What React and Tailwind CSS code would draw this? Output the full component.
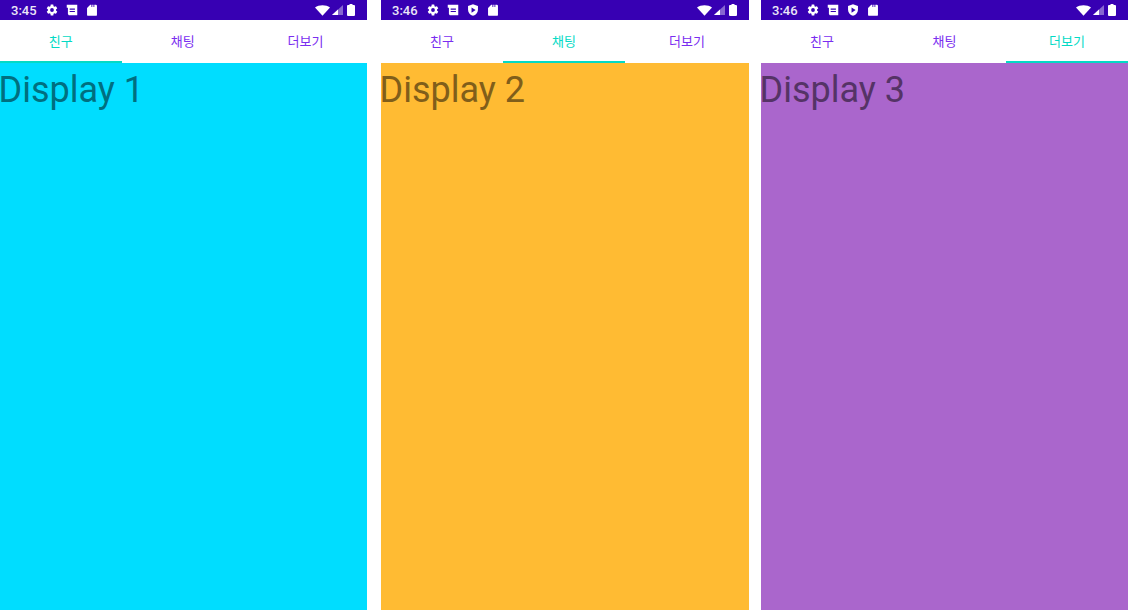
const tabs = ["친구", "채팅", "더보기"];

function Gear() {
  return (
    <svg width="14" height="14" viewBox="-1 -1 26 26" fill="#fff">
      <path d="M19.4 13c.04-.33.06-.66.06-1s-.02-.67-.07-1l2.11-1.63c.19-.15.24-.42.12-.64l-2-3.46c-.12-.22-.39-.3-.61-.22l-2.49 1c-.52-.4-1.08-.73-1.69-.98l-.38-2.65A.49.49 0 0 0 14 2h-4c-.25 0-.46.18-.49.42l-.38 2.65c-.61.25-1.17.59-1.69.98l-2.49-1a.5.5 0 0 0-.61.22l-2 3.46c-.13.22-.07.49.12.64L4.57 11c-.05.33-.07.66-.07 1s.02.67.07 1l-2.11 1.63c-.19.15-.24.42-.12.64l2 3.46c.12.22.39.3.61.22l2.49-1c.52.4 1.08.73 1.69.98l.38 2.65c.03.24.24.42.49.42h4c.25 0 .46-.18.49-.42l.38-2.65c.61-.25 1.17-.59 1.69-.98l2.49 1c.22.08.49 0 .61-.22l2-3.46c.12-.22.07-.49-.12-.64L19.4 13zM12 15.5a3.5 3.5 0 1 1 0-7 3.5 3.5 0 0 1 0 7z" />
    </svg>
  );
}

function Note() {
  return (
    <svg width="14" height="14" viewBox="0 0 24 24" fill="#fff">
      <path d="M3 3h18v18H6.500L5 19V8H3V3zm5 6.500v2h9v-2H8zm0 4v2h9v-2H8z" fillRule="evenodd" />
    </svg>
  );
}

function Shield() {
  return (
    <svg width="14" height="14" viewBox="0 0 24 24" fill="#fff">
      <path d="M12 2 3.500 5v6.500c0 5 3.400 9 8.500 10.500 5.100-1.500 8.500-5.500 8.500-10.500V5L12 2zM9.500 7.500l7 4.500-7 4.500v-9z" fillRule="evenodd" />
    </svg>
  );
}

function Sd() {
  return (
    <svg width="14" height="14" viewBox="0 0 24 24" fill="#fff">
      <path d="M9 3h2v4h1.500V3h2v4H16V3h2.500a2 2 0 0 1 2 2v15a2 2 0 0 1-2 2h-13a2 2 0 0 1-2-2V8.500L9 3z" />
    </svg>
  );
}

function Wifi() {
  return (
    <svg width="15" height="11" viewBox="0 0 14 10" fill="#fff">
      <path d="M0 2.200C1.900.8 4.300 0 7 0s5.100.8 7 2.200L7 10 0 2.200z" />
    </svg>
  );
}

function Signal() {
  return (
    <svg width="13" height="10" viewBox="0 0 13 10">
      <path d="M13 0v10H2L13 0z" fill="#fff" fillOpacity="0.4" />
      <path d="M8 4.550V10H2l6-5.450z" fill="#fff" />
    </svg>
  );
}

function Battery() {
  return (
    <svg width="8" height="12" viewBox="0 0 8 12" fill="#fff">
      <path d="M2.500 0h3v1H7a1 1 0 0 1 1 1v9a1 1 0 0 1-1 1H1a1 1 0 0 1-1-1V2a1 1 0 0 1 1-1h1.500V0z" />
    </svg>
  );
}

function StatusBar({ time, shield }) {
  return (
    <div className="flex h-5 items-center bg-[#3700b3] pl-[11px] pr-3 text-white">
      <span className="w-[26px] text-[13px] font-medium leading-none opacity-90">{time}</span>
      <div className="ml-2 flex items-center gap-[6px]">
        <Gear />
        <Note />
        {shield && <Shield />}
        <Sd />
      </div>
      <div className="ml-auto flex items-center">
        <Wifi />
        <Signal />
        <span className="ml-1 flex">
          <Battery />
        </span>
      </div>
    </div>
  );
}

function Phone({ time, shield, active, color, textColor, label, width, cols }) {
  return (
    <div className={`flex h-[610px] flex-col ${width}`}>
      <StatusBar time={time} shield={shield} />
      <div className={`grid h-[43px] bg-white ${cols}`}>
        {tabs.map((tab, index) => (
          <div
            key={tab}
            className={
              index === active
                ? "flex items-center justify-center border-b-2 border-[#03dac5] pt-[2px] text-[13px] text-[#03dac5]"
                : "flex items-center justify-center text-[13px] text-[#7a2ef0]"
            }
          >
            {tab}
          </div>
        ))}
      </div>
      <div className={`flex-1 ${color}`}>
        <p className={`-ml-[1.5px] text-4xl leading-[54px] ${textColor}`}>{label}</p>
      </div>
    </div>
  );
}

export default function App() {
  return (
    <div className="flex h-[610px] w-[1128px] overflow-hidden bg-white font-['Roboto','Noto_Sans_CJK_KR',sans-serif]">
      <Phone time="3:45" active={0} color="bg-[#00ddff]" textColor="text-[#006f80]" label="Display 1" width="w-[367px]" cols="grid-cols-[121.6px_122.4px_1fr]" />
      <div className="ml-[14px]">
        <Phone time="3:46" shield active={1} color="bg-[#ffbb33]" textColor="text-[#805e1a]" label="Display 2" width="w-[368px]" cols="grid-cols-[122px_122px_1fr]" />
      </div>
      <div className="ml-3">
        <Phone time="3:46" shield active={2} color="bg-[#aa66cc]" textColor="text-[#553366]" label="Display 3" width="w-[367px]" cols="grid-cols-[122px_123px_1fr]" />
      </div>
    </div>
  );
}
